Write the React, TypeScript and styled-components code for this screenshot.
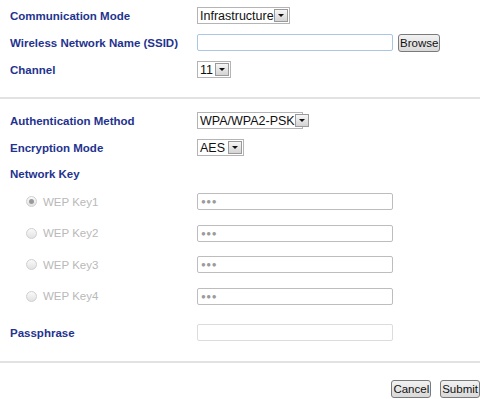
import React from 'react';
import styled, { createGlobalStyle } from 'styled-components';

const GlobalStyle = createGlobalStyle`
  html, body {
    margin: 0;
    padding: 0;
    background: #fff;
  }
  body {
    font-family: 'Liberation Sans', Arial, sans-serif;
  }
`;

const Page = styled.div`
  width: 487px;
  height: 399px;
  overflow: hidden;
`;

const Section = styled.div<{ $top: number }>`
  padding-top: ${(p) => p.$top}px;
`;

const Row = styled.div<{ $h: number }>`
  display: grid;
  grid-template-columns: 187px auto;
  align-items: center;
  height: ${(p) => p.$h}px;
  padding-left: 10px;
`;

const Label = styled.div`
  font-size: 11.5px;
  font-weight: bold;
  color: #1f338f;
`;

const RadioLabel = styled.label`
  display: flex;
  align-items: center;
  gap: 6px;
  padding-left: 16px;
  font-size: 11.5px;
  color: #b9b9b9;
`;

const Radio = styled.span<{ $checked?: boolean }>`
  position: relative;
  width: 9px;
  height: 9px;
  border-radius: 50%;
  border: 1px solid #cfcfcf;
  background: linear-gradient(#fafafa, #e2e2e2);
  &::after {
    content: '';
    display: ${(p) => (p.$checked ? 'block' : 'none')};
    position: absolute;
    left: 2px;
    top: 2px;
    width: 5px;
    height: 5px;
    border-radius: 50%;
    background: #9a9a9a;
  }
`;

const Controls = styled.div`
  display: flex;
  align-items: center;
  gap: 5px;
`;

const Select = styled.div<{ $w: number }>`
  display: flex;
  align-items: center;
  justify-content: space-between;
  box-sizing: border-box;
  width: ${(p) => p.$w}px;
  height: 17px;
  border: 1px solid #b4b4b4;
  background: #fff;
  font-size: 12.5px;
  color: #111;
  padding-left: 2px;
  white-space: nowrap;
`;

const Arrow = styled.span`
  position: relative;
  flex: none;
  box-sizing: border-box;
  width: 14px;
  height: 13px;
  margin-right: 1px;
  border: 1px solid #9a9a9a;
  background: linear-gradient(#f6f6f6, #d4d4d4);
  &::after {
    content: '';
    position: absolute;
    left: 3px;
    top: 4px;
    border-left: 3px solid transparent;
    border-right: 3px solid transparent;
    border-top: 3px solid #111;
  }
`;

const TextBox = styled.div<{ $tone?: 'blue' | 'light' }>`
  box-sizing: border-box;
  width: 196px;
  height: 17px;
  border: 1px solid
    ${(p) => (p.$tone === 'blue' ? '#a9c6e2' : p.$tone === 'light' ? '#dcdcdc' : '#bdbdbd')};
  border-radius: 2px;
  background: #fff;
  display: flex;
  align-items: center;
  padding-left: 3px;
`;

const Dots = styled.span`
  font-size: 8px;
  letter-spacing: 0.5px;
  color: #9b9b9b;
`;

const Button = styled.button`
  box-sizing: border-box;
  height: 18px;
  padding: 0 1px;
  font-family: 'Liberation Sans', Arial, sans-serif;
  font-size: 11.5px;
  color: #111;
  border: 1px solid #7a7a7a;
  border-radius: 3px;
  background: linear-gradient(#f2f2f2, #d9d9d9);
`;

const Divider = styled.hr<{ $top: number }>`
  margin: ${(p) => p.$top}px 0 0 0;
  width: 480px;
  height: 2px;
  border: none;
  background: #e2e2e2;
`;

const Actions = styled.div`
  display: flex;
  justify-content: flex-end;
  gap: 9px;
  padding: 17px 7px 0 0;
`;

const wepKeys = ['WEP Key1', 'WEP Key2', 'WEP Key3', 'WEP Key4'];

const App: React.FC = () => (
  <Page>
    <GlobalStyle />
    <Section $top={2}>
      <Row $h={27}>
        <Label>Communication Mode</Label>
        <Controls>
          <Select $w={93}>
            Infrastructure <Arrow />
          </Select>
        </Controls>
      </Row>
      <Row $h={27}>
        <Label>Wireless Network Name (SSID)</Label>
        <Controls>
          <TextBox $tone="blue" />
          <Button>Browse</Button>
        </Controls>
      </Row>
      <Row $h={27}>
        <Label>Channel</Label>
        <Controls>
          <Select $w={34}>
            11 <Arrow />
          </Select>
        </Controls>
      </Row>
    </Section>
    <Divider $top={14} />
    <Section $top={8}>
      <Row $h={27}>
        <Label>Authentication Method</Label>
        <Controls>
          <Select $w={106}>
            WPA/WPA2-PSK <Arrow />
          </Select>
        </Controls>
      </Row>
      <Row $h={27}>
        <Label>Encryption Mode</Label>
        <Controls>
          <Select $w={47}>
            AES <Arrow />
          </Select>
        </Controls>
      </Row>
      <Row $h={25}>
        <Label>Network Key</Label>
      </Row>
      {wepKeys.map((k, i) => (
        <Row $h={31.5} key={k}>
          <RadioLabel>
            <Radio $checked={i === 0} />
            {k}
          </RadioLabel>
          <Controls>
            <TextBox>
              <Dots>●●●</Dots>
            </TextBox>
          </Controls>
        </Row>
      ))}
      <Section $top={7}>
        <Row $h={27}>
          <Label>Passphrase</Label>
          <Controls>
            <TextBox $tone="light" />
          </Controls>
        </Row>
      </Section>
    </Section>
    <Divider $top={15} />
    <Actions>
      <Button>Cancel</Button>
      <Button>Submit</Button>
    </Actions>
  </Page>
);

export default App;
